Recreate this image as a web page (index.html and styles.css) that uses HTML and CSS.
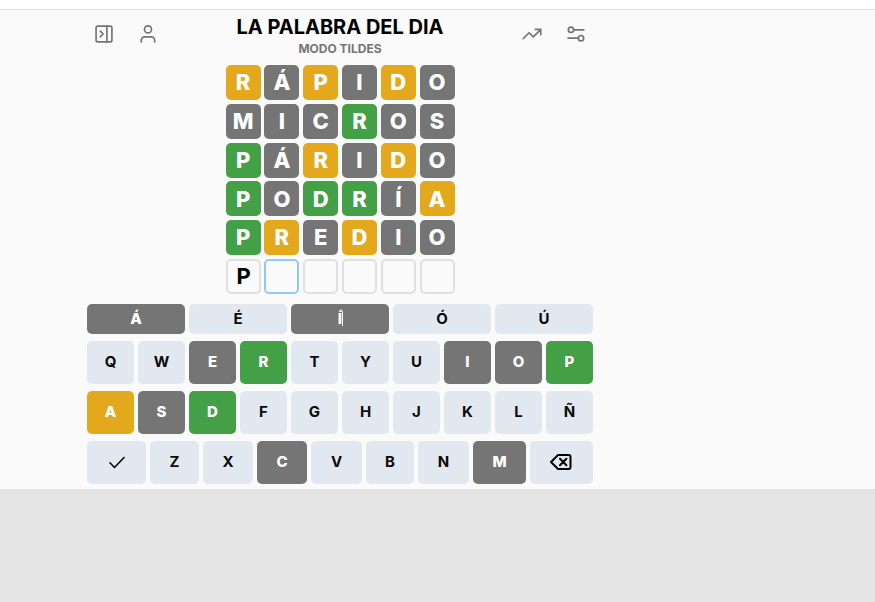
FILE: index.html
```html
<!DOCTYPE html>
<html lang="es">
<head>
<meta charset="utf-8">
<title>La palabra del dia</title>
<link rel="stylesheet" href="styles.css">
</head>
<body>
<div class="topbar"></div>
<main class="game">
  <header class="header">
    <nav class="actions">
      <svg class="icon" viewBox="0 0 24 24"><rect x="2.500" y="2.500" width="19" height="19" rx="2"/><path d="M15.500 2.500v19M7.500 8.500l3.500 3.500-3.500 3.500"/></svg>
      <svg class="icon" viewBox="0 0 24 24"><circle cx="12" cy="6.500" r="4.200"/><path d="M4 21.500v-2a4 4 0 0 1 4-4h8a4 4 0 0 1 4 4v2"/></svg>
    </nav>
    <div class="heading">
      <h1 class="title">LA PALABRA DEL DIA</h1>
      <p class="mode">MODO TILDES</p>
    </div>
    <nav class="actions">
      <svg class="icon" viewBox="0 0 24 24"><path d="M1.500 17.500l7-7 5 5 8.500-8.500M16 6.500h6.500v6.500"/></svg>
      <svg class="icon" viewBox="0 0 24 24"><circle cx="6" cy="7" r="3.200"/><path d="M9.200 7h12.300M2.500 17h12.300"/><circle cx="18" cy="17" r="3.200"/></svg>
    </nav>
  </header>
  <section class="board">
    <div class="tile present">R</div><div class="tile absent">Á</div><div class="tile present">P</div><div class="tile absent">I</div><div class="tile present">D</div><div class="tile absent">O</div>
    <div class="tile absent">M</div><div class="tile absent">I</div><div class="tile absent">C</div><div class="tile correct">R</div><div class="tile absent">O</div><div class="tile absent">S</div>
    <div class="tile correct">P</div><div class="tile absent">Á</div><div class="tile present">R</div><div class="tile absent">I</div><div class="tile present">D</div><div class="tile absent">O</div>
    <div class="tile correct">P</div><div class="tile absent">O</div><div class="tile correct">D</div><div class="tile correct">R</div><div class="tile absent">Í</div><div class="tile present">A</div>
    <div class="tile correct">P</div><div class="tile present">R</div><div class="tile absent">E</div><div class="tile present">D</div><div class="tile absent">I</div><div class="tile absent">O</div>
    <div class="tile empty">P</div><div class="tile empty active"></div><div class="tile empty"></div><div class="tile empty"></div><div class="tile empty"></div><div class="tile empty"></div>
  </section>
  <section class="keyboard">
    <div class="keys accents">
      <button class="key absent">Á</button><button class="key">É</button><button class="key absent"><span class="caret">Í</span></button><button class="key">Ó</button><button class="key">Ú</button>
    </div>
    <div class="keys">
      <button class="key">Q</button><button class="key">W</button><button class="key absent">E</button><button class="key correct">R</button><button class="key">T</button><button class="key">Y</button><button class="key">U</button><button class="key absent">I</button><button class="key absent">O</button><button class="key correct">P</button>
    </div>
    <div class="keys">
      <button class="key present">A</button><button class="key absent">S</button><button class="key correct">D</button><button class="key">F</button><button class="key">G</button><button class="key">H</button><button class="key">J</button><button class="key">K</button><button class="key">L</button><button class="key">Ñ</button>
    </div>
    <div class="keys bottom">
      <button class="key"><svg class="check" viewBox="0 0 24 24"><path d="M3.500 13l5.500 5.500L20.500 6.500"/></svg></button><button class="key">Z</button><button class="key">X</button><button class="key absent">C</button><button class="key">V</button><button class="key">B</button><button class="key">N</button><button class="key absent">M</button><button class="key"><svg class="backspace" viewBox="0 0 24 24"><path d="M9 5H19.500a2 2 0 0 1 2 2v10a2 2 0 0 1-2 2H9L2 12zM11 8.800l6.400 6.400M17.400 8.800l-6.400 6.400"/></svg></button>
    </div>
  </section>
</main>
</body>
</html>
```
FILE: styles.css
```css
* {
  box-sizing: border-box;
}

body {
  margin: 0;
  height: 602px;
  overflow: hidden;
  background: #e4e4e4;
  font-family: Inter, "Liberation Sans", sans-serif;
  color: #000;
}

.topbar {
  height: 10px;
  background: #fff;
  border-bottom: 1px solid #e0e0e0;
}

.game {
  height: 479px;
  padding-left: 87px;
  background: #fafafa;
}

.header {
  display: grid;
  grid-template-columns: 149px 208px 149px;
  width: 506px;
  height: 55px;
}

.actions {
  display: flex;
  gap: 24px;
  padding: 14px 7px 0;
}

.actions:last-child {
  justify-content: flex-end;
}

.icon {
  width: 20px;
  height: 20px;
  fill: none;
  stroke: #757575;
  stroke-width: 2;
  stroke-linecap: round;
  stroke-linejoin: round;
}

.heading {
  padding-top: 5px;
  text-align: center;
  white-space: nowrap;
}

.title {
  margin: 0;
  font-size: 20px;
  font-weight: 700;
  line-height: 24px;
}

.mode {
  margin: 2px 0 0;
  font-size: 12px;
  font-weight: 700;
  line-height: 16px;
  color: #757575;
}

.board {
  display: grid;
  grid-template-columns: repeat(6, 35px);
  grid-auto-rows: 35px;
  gap: 3.75px 3.8px;
  margin-left: 138.6px;
  height: 239px;
}

.tile {
  display: flex;
  align-items: center;
  justify-content: center;
  padding-bottom: 0.5px;
  border-radius: 5px;
  font-size: 22px;
  font-weight: 800;
  line-height: 1;
}

.empty {
  padding: 0 0 0 1px;
  border: 2px solid #e0e0e0;
  font-weight: 700;
}

.active {
  border-color: #90caf9;
}

.keyboard {
  display: grid;
  grid-template-rows: 30px 43px 43px 43px;
  row-gap: 7px;
  width: 506px;
}

.keys {
  display: grid;
  grid-template-columns: repeat(10, 47px);
  column-gap: 4px;
}

.accents {
  grid-template-columns: repeat(5, 98px);
}

.bottom {
  grid-template-columns: 59px 49px 50px 50px 51px 48px 51px 53px 63px;
}

.key {
  display: flex;
  align-items: center;
  justify-content: center;
  padding: 0 0 2px;
  border: 0;
  border-radius: 5px;
  background: #e1e8f0;
  color: #0a0a0a;
  font-family: inherit;
  font-size: 15px;
  font-weight: 700;
  line-height: 1;
}

.accents .key {
  padding-bottom: 1px;
}

.absent {
  background: #757575;
  color: #fff;
}

.present {
  background: #e4a81d;
  color: #fff;
}

.correct {
  background: #43a047;
  color: #fff;
}

.key.absent,
.key.present,
.key.correct {
  color: #fff;
  font-weight: 800;
}

.caret {
  margin-right: -1px;
  border-right: 1px solid #fff;
}

.check,
.backspace {
  width: 20px;
  height: 20px;
  fill: none;
  stroke: #000;
  stroke-width: 1.8;
  stroke-linecap: round;
  stroke-linejoin: round;
}

.backspace {
  width: 24px;
  height: 24px;
  margin-right: 1px;
  stroke-width: 2;
}
```
